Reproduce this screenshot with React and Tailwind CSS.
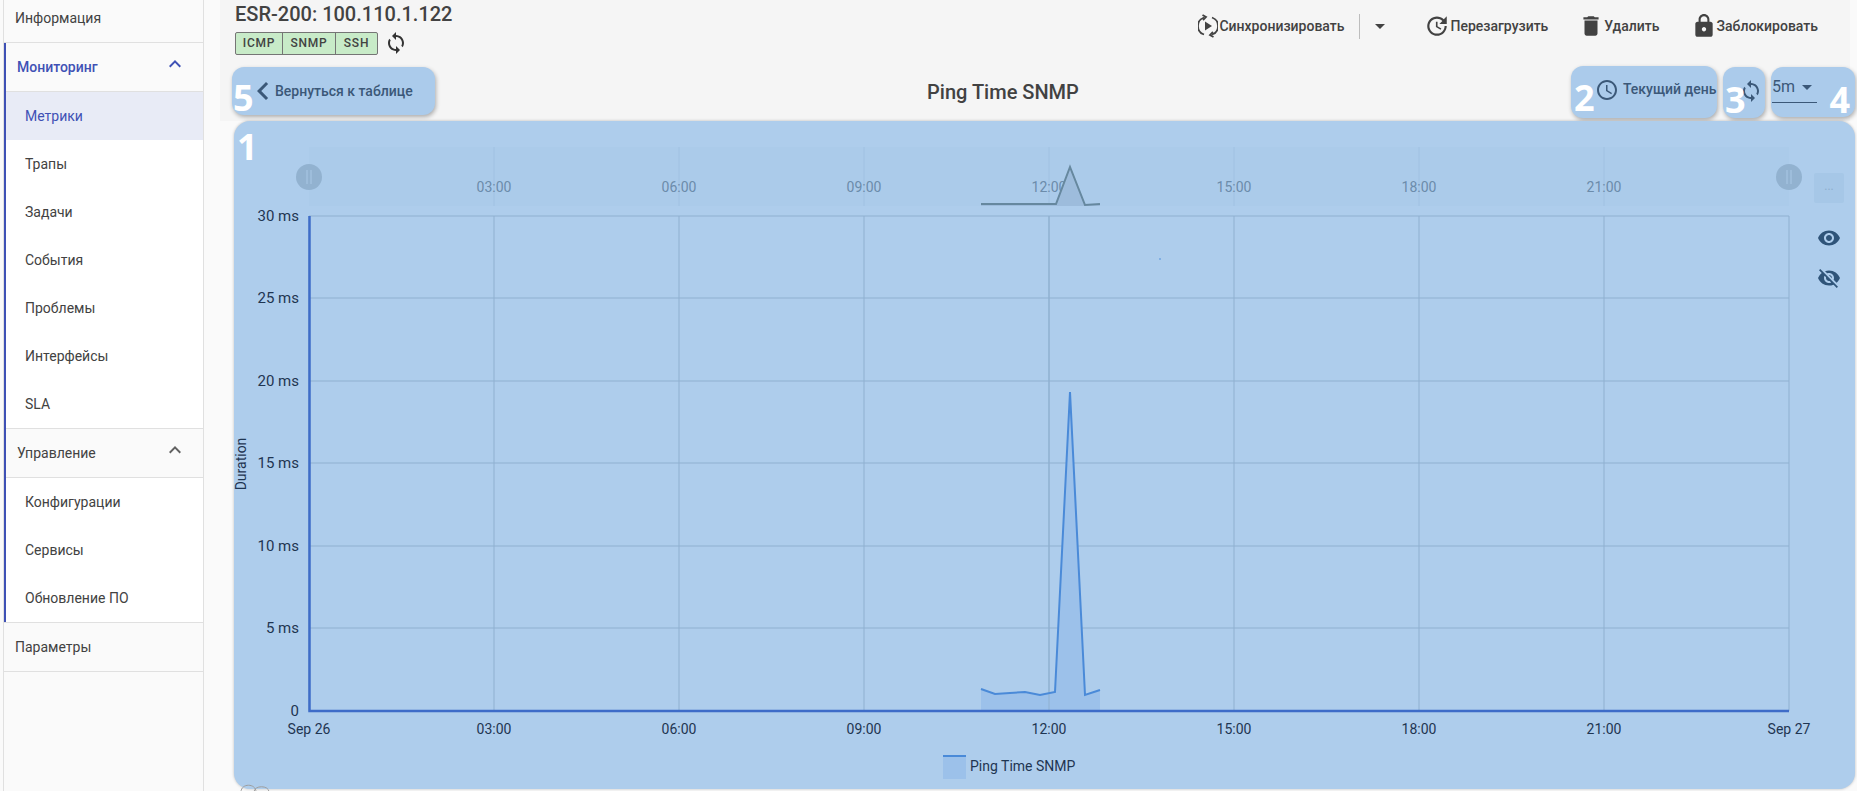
import React from "react";
import {
  MdAccessTime,
  MdArrowDropDown,
  MdChevronLeft,
  MdDelete,
  MdExpandLess,
  MdLock,
  MdRemoveRedEye,
  MdSync,
  MdUpdate,
  MdVisibilityOff,
} from "react-icons/md";

const monitoring = ["Метрики", "Трапы", "Задачи", "События", "Проблемы", "Интерфейсы", "SLA"];
const management = ["Конфигурации", "Сервисы", "Обновление ПО"];

const yTicks = [
  { label: "30 ms", y: 216 },
  { label: "25 ms", y: 298 },
  { label: "20 ms", y: 381 },
  { label: "15 ms", y: 463 },
  { label: "10 ms", y: 546 },
  { label: "5 ms", y: 628 },
  { label: "0", y: 711 },
];

const xTicks = [
  { label: "Sep 26", x: 308 },
  { label: "03:00", x: 493 },
  { label: "06:00", x: 678 },
  { label: "09:00", x: 863 },
  { label: "12:00", x: 1048 },
  { label: "15:00", x: 1233 },
  { label: "18:00", x: 1418 },
  { label: "21:00", x: 1603 },
  { label: "Sep 27", x: 1788 },
];

const line = "980,689 994,694 1009,693 1024,692 1039,695 1054,692 1069,392 1084,695 1099,690";
const miniLine = "980,204 1055,204 1069,167 1084,205 1099,204";

const SubItem = ({ label, active }) => (
  <div
    className={`flex h-12 items-center pl-[19px] text-sm ${
      active ? "bg-[#e8ebf6] text-[#3f51b5]" : "bg-white text-[#424242]"
    }`}
  >
    {label}
  </div>
);

const GroupHeader = ({ label, active }) => (
  <div
    className={`flex h-[49px] items-center justify-between border-b border-[#e0e0e0] pl-[11px] pr-4 text-sm ${
      active ? "font-medium text-[#3f51b5]" : "text-[#424242]"
    }`}
  >
    {label}
    <MdExpandLess size={24} className={`-mt-1.5 ${active ? "text-[#3f51b5]" : "text-[#616161]"}`} />
  </div>
);

const Sidebar = () => (
  <aside className="ml-[3px] flex h-full w-[201px] shrink-0 flex-col border-x border-[#e0e0e0] bg-[#fafafa]">
    <div className="flex h-[43px] items-center border-b border-[#e0e0e0] pb-1.5 pl-[11px] text-sm text-[#424242]">Информация</div>
    <div className="border-l-2 border-[#3f51b5]">
      <GroupHeader label="Мониторинг" active />
      {monitoring.map((item) => (
        <SubItem key={item} label={item} active={item === "Метрики"} />
      ))}
      <div className="border-t border-[#e0e0e0]" />
      <GroupHeader label="Управление" />
      {management.map((item) => (
        <SubItem key={item} label={item} />
      ))}
    </div>
    <div className="flex h-[50px] items-center border-y border-[#e0e0e0] pl-[11px] text-sm text-[#424242]">Параметры</div>
  </aside>
);

const SyncPlayIcon = () => (
  <svg width="20" height="26" viewBox="0 0 20 26" fill="none" stroke="#424242" strokeWidth="1.8">
    <path d="M6 4.5 A9 9 0 0 0 6 21.5" />
    <path d="M14 4.5 A9 9 0 0 1 14 21.5" />
    <path d="M4.5 2 L8 4 L5 7" />
    <path d="M15.5 24 L12 22 L15 19" />
    <path d="M7 8.5 L14 13 L7 17.5 Z" fill="#424242" stroke="none" />
  </svg>
);

const Action = ({ icon, label, className }) => (
  <button className={`flex items-center text-sm font-medium text-[#424242] ${className}`}>
    {icon}
    {label}
  </button>
);

const Header = () => (
  <div className="flex h-[66px] items-start pl-[15px]">
    <div>
      <h1 className="text-xl leading-[28px] font-medium text-[#424242]">ESR-200: 100.110.1.122</h1>
      <div className="mt-[3px] flex items-center">
        <div className="flex h-[23px] rounded-[2px] border border-[#757575] bg-[#c8ebc8] text-xs font-medium tracking-[0.8px] text-[#424242]">
          <span className="flex w-[47px] items-center justify-center border-r border-[#757575]">ICMP</span>
          <span className="flex w-[53px] items-center justify-center border-r border-[#757575]">SNMP</span>
          <span className="flex w-[41px] items-center justify-center">SSH</span>
        </div>
        <MdSync size={24} className="ml-[6px] text-[#333]" />
      </div>
    </div>
    <div className="ml-auto flex items-center pt-[13px] pr-[32px]">
      <Action icon={<SyncPlayIcon />} label="Синхронизировать" className="gap-[1px]" />
      <div className="ml-[15px] h-[25px] border-l border-[#bdbdbd]" />
      <MdArrowDropDown size={24} className="mr-[32px] ml-2 text-[#424242]" />
      <Action icon={<MdUpdate size={26} />} label="Перезагрузить" className="mr-[30px]" />
      <Action icon={<MdDelete size={26} />} label="Удалить" className="mr-[31px]" />
      <Action icon={<MdLock size={26} />} label="Заблокировать" />
    </div>
  </div>
);

const Mark = ({ children, className }) => (
  <span
    className={`absolute text-[36px] leading-none font-bold text-white [font-family:'Open_Sans',sans-serif] ${className}`}
  >
    {children}
  </span>
);

const Toolbar = () => (
  <div className="mr-[-5px] -ml-[4px] flex h-[55px] items-start justify-between">
    <button className="relative mt-px flex h-12 w-[203px] items-center rounded-xl bg-[#abcbeb] pb-px pl-[22px] text-sm font-medium text-[#3b5878] shadow-[1px_2px_4px_rgba(0,0,0,0.3)]">
      <Mark className="top-[13px] left-[1px]">5</Mark>
      <MdChevronLeft size={36} className="-ml-[9px]" />
      <span className="-ml-[6px]">Вернуться к таблице</span>
    </button>
    <h2 className="pt-[12px] text-xl leading-[28px] font-medium text-[#424242]">Ping Time SNMP</h2>
    <div className="flex gap-[6px]">
      <button className="relative flex h-[52px] w-[146px] items-start rounded-xl bg-[#abcbeb] pt-3 pl-[24px] text-sm font-medium whitespace-nowrap text-[#3b5878] shadow-[1px_2px_4px_rgba(0,0,0,0.3)]">
        <Mark className="top-[14px] left-[3px]">2</Mark>
        <MdAccessTime size={24} className="mr-[4px] shrink-0" />
        <span className="pt-[1px] leading-[20px]">Текущий день</span>
      </button>
      <button className="relative mt-px flex h-[51px] w-[42px] justify-center rounded-xl bg-[#abcbeb] pt-3 pl-[14px] text-[#3b5878] shadow-[1px_2px_4px_rgba(0,0,0,0.3)]">
        <Mark className="top-[15px] left-[2px]">3</Mark>
        <MdSync size={24} />
      </button>
      <div className="relative mt-px h-[50px] w-[84px] rounded-xl bg-[#abcbeb] pl-px text-[#3b5878] shadow-[1px_2px_4px_rgba(0,0,0,0.3)]">
        <div className="flex h-[36px] w-[45px] items-center border-b border-[#3b5878] pt-1 text-base">
          5m
          <MdArrowDropDown size={24} className="shrink-0" />
        </div>
        <Mark className="top-[15px] right-[5px]">4</Mark>
      </div>
    </div>
  </div>
);

const Chart = () => (
  <svg viewBox="233 121 1621 668" width="1621" height="668" className="block" fontFamily="Roboto, sans-serif">
    <rect x="308" y="147" width="1480" height="59" fill="#abcbea" />
    {xTicks.slice(1, 8).map((t) => (
      <g key={t.label}>
        <line x1={t.x} x2={t.x} y1="147" y2="206" stroke="#a0c1e2" />
        <text x={t.x} y="192" textAnchor="middle" fontSize="14" fill="#6c8cab">
          {t.label}
        </text>
      </g>
    ))}
    <polygon points={`980,206 ${miniLine} 1099,206`} fill="#9dbcdc" />
    <polyline points={miniLine} fill="none" stroke="#66889f" strokeWidth="2" />
    <circle cx="308" cy="177" r="13" fill="#92b2d0" />
    <path d="M306 170v14M310 170v14" stroke="#a9c8e6" strokeWidth="1" />
    <ellipse cx="1788" cy="177" rx="13" ry="13" fill="#92b2d0" />
    <path d="M1786 170v14M1790 170v14" stroke="#a9c8e6" strokeWidth="1" />

    {yTicks.map((t) => (
      <g key={t.label}>
        <line x1="308" x2="1788" y1={t.y} y2={t.y} stroke="#8fb0d0" />
        <text x="298" y={t.y + 5} textAnchor="end" fontSize="15" fill="#1f3552">
          {t.label}
        </text>
      </g>
    ))}
    {xTicks.map((t) => (
      <g key={t.label}>
        <line x1={t.x} x2={t.x} y1="216" y2="711" stroke="#8fb0d0" />
        <text x={t.x} y="734" textAnchor="middle" fontSize="14" fill="#1f3552">
          {t.label}
        </text>
      </g>
    ))}
    <polygon points={`980,711 ${line} 1099,711`} fill="#9cc1ea" />
    <line x1="1048" x2="1048" y1="216" y2="711" stroke="#8fb0d0" />
    <polyline points={line} fill="none" stroke="#4a8ad8" strokeWidth="2" />
    <path d="M308.5 216V711H1788" fill="none" stroke="#3e6cc8" strokeWidth="2.5" />
    <circle cx="1159" cy="259" r="0.8" fill="#4a8ad8" />

    <text transform="translate(245 464) rotate(-90)" textAnchor="middle" fontSize="14" fill="#1f3552">
      Duration
    </text>

    <rect x="942" y="755" width="23" height="24" fill="#9cc1ea" />
    <rect x="942" y="755" width="23" height="2" fill="#4a8ad8" />
    <text x="969" y="771" fontSize="14" fill="#1f3552">
      Ping Time SNMP
    </text>
  </svg>
);

const ChartCard = () => (
  <div className="relative -ml-[2px] h-[668px] w-[1621px] overflow-hidden rounded-2xl bg-[#aecdec] shadow-[0_0_3px_rgba(0,0,0,0.25)]">
    <Chart />
    <Mark className="top-[8px] left-[3px]">1</Mark>
    <div className="absolute top-[52px] left-[1580px] flex h-[30px] w-[30px] items-center justify-center rounded-[2px] bg-[#a6c7e7] pb-1 text-xs text-[#8eaecd]">
      ...
    </div>
    <MdRemoveRedEye size={24} className="absolute top-[105px] left-[1583px] text-[#2f5479]" />
    <MdVisibilityOff size={24} className="absolute top-[145px] left-[1583px] text-[#2f5479]" />
  </div>
);

export default function App() {
  return (
    <div className="flex h-[791px] w-[1857px] overflow-hidden bg-[#fafafa] font-['Roboto',sans-serif]">
      <Sidebar />
      <main className="relative ml-4 min-w-0 flex-1">
        <div className="w-[1630px] bg-[#f5f5f5]">
          <Header />
          <div className="pl-4">
            <Toolbar />
          </div>
        </div>
        <div className="pl-4">
          <ChartCard />
        </div>
        <svg width="56" height="8" viewBox="0 0 56 8" className="absolute top-[784px] left-[20px]" fill="none" stroke="#9e9e9e">
          <path d="M1 8C1 -1 16 -1 16 8M14 8C14 1 29 1 29 8" />
        </svg>
      </main>
    </div>
  );
}
